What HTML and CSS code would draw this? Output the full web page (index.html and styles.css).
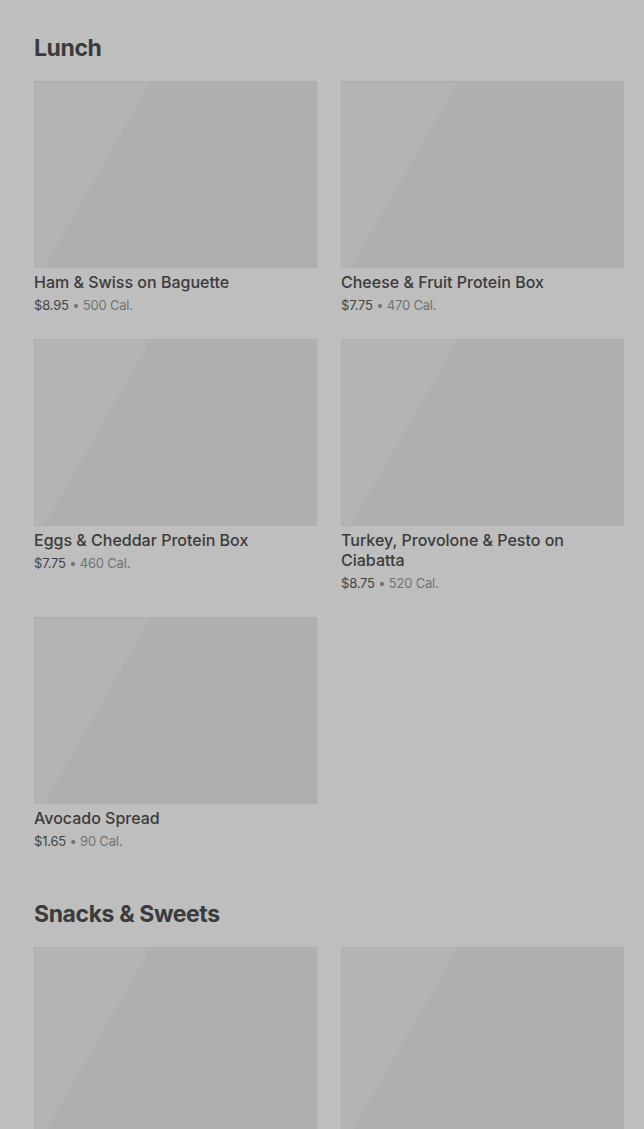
FILE: index.html
```html
<!DOCTYPE html>
<html lang="en">
<head>
    <meta charset="UTF-8">
    <meta name="viewport" content="width=device-width, initial-scale=1.0">
    <title>Menu</title>
    <link rel="stylesheet" href="styles.css">
</head>
<body>
    <main class="menu">
        <section class="menu-section">
            <h2 class="section-title">Lunch</h2>
            <div class="item-grid">
                <div class="item">
                    <div class="item-image"></div>
                    <h3 class="item-name">Ham &amp; Swiss on Baguette</h3>
                    <p class="item-meta"><span class="price">$8.95</span> • 500 Cal.</p>
                </div>
                <div class="item">
                    <div class="item-image"></div>
                    <h3 class="item-name">Cheese &amp; Fruit Protein Box</h3>
                    <p class="item-meta"><span class="price">$7.75</span> • 470 Cal.</p>
                </div>
                <div class="item">
                    <div class="item-image"></div>
                    <h3 class="item-name">Eggs &amp; Cheddar Protein Box</h3>
                    <p class="item-meta"><span class="price">$7.75</span> • 460 Cal.</p>
                </div>
                <div class="item">
                    <div class="item-image"></div>
                    <h3 class="item-name">Turkey, Provolone &amp; Pesto on Ciabatta</h3>
                    <p class="item-meta"><span class="price">$8.75</span> • 520 Cal.</p>
                </div>
                <div class="item">
                    <div class="item-image"></div>
                    <h3 class="item-name">Avocado Spread</h3>
                    <p class="item-meta"><span class="price">$1.65</span> • 90 Cal.</p>
                </div>
            </div>
        </section>

        <section class="menu-section">
            <h2 class="section-title">Snacks &amp; Sweets</h2>
            <div class="item-grid">
                <div class="item">
                    <div class="item-image"></div>
                </div>
                <div class="item">
                    <div class="item-image"></div>
                </div>
            </div>
        </section>
    </main>
</body>
</html>
```

FILE: styles.css
```css
/* --- base --- */
:root {
    --bg-color: #bebebe;
    --image-light: #b4b4b4;
    --image-dark: #afafaf;
    --text-primary: #3b3b3b;
    --text-price: #454545;
    --text-secondary: #737373;
}
* { margin: 0; padding: 0; box-sizing: border-box; }
body {
    font-family: 'Inter', 'Roboto', sans-serif;
    background-color: var(--bg-color);
    color: var(--text-primary);
    min-height: 100vh;
}

/* --- sections --- */
.menu { padding: 0 20px 0 34px; }
.menu-section { padding: 32px 0 15px; }
.section-title {
    font-size: 23px;
    font-weight: 700;
    line-height: 32px;
    letter-spacing: -0.4px;
    margin-bottom: 17px;
}

/* --- cards --- */
.item-grid {
    display: grid;
    grid-template-columns: 283px 283px;
    column-gap: 24px;
    row-gap: 24px;
    align-items: start;
}
.item-image {
    height: 187px;
    background: linear-gradient(120deg, var(--image-light) 0 30%, var(--image-dark) 30% 100%);
    box-shadow: inset 0 0 0 1px #aeaeae;
}
.item-name {
    font-size: 16px;
    font-weight: 500;
    line-height: 20px;
    margin-top: 4px;
}
.item-meta {
    font-size: 13px;
    line-height: 20px;
    letter-spacing: -0.2px;
    margin-top: 3px;
    color: var(--text-secondary);
}
.item-meta .price { color: var(--text-price); }
```
